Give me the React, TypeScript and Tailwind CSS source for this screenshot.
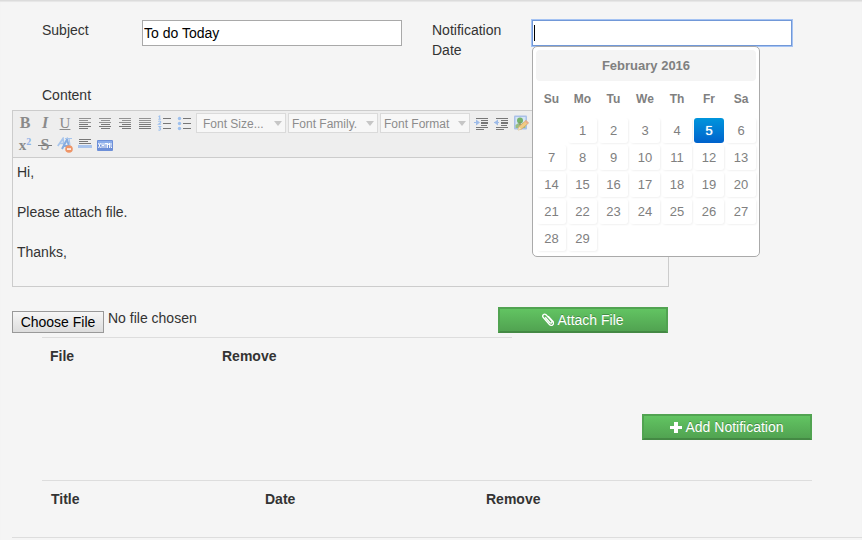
import { useRef, type ReactNode } from "react";

const WEEK_DAYS = ["Su", "Mo", "Tu", "We", "Th", "Fr", "Sa"];
const WEEKS: (number | null)[][] = [
  [null, 1, 2, 3, 4, 5, 6],
  [7, 8, 9, 10, 11, 12, 13],
  [14, 15, 16, 17, 18, 19, 20],
  [21, 22, 23, 24, 25, 26, 27],
  [28, 29, null, null, null, null, null],
];
const SELECTED_DAY = 5;

function ToolButton({ label, children }: { label: string; children: ReactNode }) {
  return (
    <button
      type="button"
      aria-label={label}
      className="flex h-5 w-5 shrink-0 items-center justify-center text-[#8a8a8a]"
    >
      {children}
    </button>
  );
}

function Icon({ children }: { children: ReactNode }) {
  return (
    <svg width="16" height="16" viewBox="0 0 16 16" shapeRendering="crispEdges" aria-hidden="true">
      {children}
    </svg>
  );
}

function AlignIcon({ align }: { align: "left" | "center" | "right" | "full" }) {
  return (
    <Icon>
      {[3, 5, 7, 9, 11, 13].map((y, i) => {
        const w = align === "full" || i % 2 === 0 ? 12 : 9;
        const x = align === "center" ? (w === 12 ? 2 : 4) : align === "right" ? 14 - w : 2;
        return <rect key={y} x={x} y={y} width={w} height="1" fill={i > 2 ? "#777" : "#929292"} />;
      })}
    </Icon>
  );
}

function IndentIcon({ outward }: { outward?: boolean }) {
  return (
    <Icon>
      <path d="M3 3h12v1H3zM8 5h7v1H8zM8 7h7v2H8zM8 10h6v1H8zM3 12h12v1H3zM3 14h8v1H3z" fill="#777" />
      <path d={outward ? "M5 4.5v6L1 7.5z" : "M3 4.5v6l4-3z"} fill="#9dbbe8" shapeRendering="auto" />
      <path d="M1 7h5v1H1z" fill="#9dbbe8" />
    </Icon>
  );
}

function NumberListIcon() {
  return (
    <svg width="16" height="16" viewBox="0 0 16 16" aria-hidden="true">
      <path
        d="M1.5 1.8L2.7 1v3.2M1.3 4.2h2.6M1.3 6.5q1.6-.9 2.3 0T1.5 9.3h2.6M1.3 11.5h2.4L2.5 13q2.2.8.2 2.2l-1.4-.2"
        fill="none"
        stroke="#9dc0ee"
        strokeWidth="1.1"
      />
      <path d="M6 3h8v1H6zM6 8h8v1H6zM6 13h8v1H6z" fill="#777" />
    </svg>
  );
}

function BulletListIcon() {
  return (
    <svg width="16" height="16" viewBox="0 0 16 16" aria-hidden="true">
      {[3.5, 8.5, 13.5].map((y) => (
        <circle key={y} cx="2.5" cy={y} r="1.7" fill="#9dc0ee" />
      ))}
      <path d="M6 3h8v1H6zM6 8h8v1H6zM6 13h8v1H6z" fill="#777" />
    </svg>
  );
}

function ImageIcon() {
  return (
    <svg width="16" height="16" viewBox="0 0 16 16" aria-hidden="true">
      <rect x="1" y=".5" width="13" height="14" rx="1" fill="#a9c0e8" />
      <rect x="2.5" y="2" width="10" height="11" fill="#d5e5f5" />
      <path d="M2.5 10l3-2 3 1 4-2v6h-10z" fill="#98bd83" />
      <circle cx="7" cy="5.5" r="3" fill="#75b26b" />
      <path d="M6.5 7h1v3h-1z" fill="#8c7c60" />
      <path d="M5 15l1-3.5 7-6 2.5 2.6-7 6z" fill="#f1cb83" stroke="#d6a85e" strokeWidth=".7" />
      <path d="M5 15l1-3.2 2 2.2z" fill="#f6e4c4" />
      <path d="M12 6.5l1.3-1.2 2.3 2.6-1.2 1.1z" fill="#e8a98d" />
    </svg>
  );
}

function CleanupIcon() {
  return (
    <svg width="16" height="16" viewBox="0 0 16 16" aria-hidden="true">
      <path d="M.8 9L6 1.5 7 9M2.7 6.5h4" fill="none" stroke="#a7c5ec" strokeWidth="1.7" />
      <path d="M5 12l5-9.5 2.7 9M7 9h5" fill="none" stroke="#86ace0" strokeWidth="2" />
      <path d="M8 1.5h7M12 1.5l1 7" stroke="#a7c5ec" strokeWidth="1.2" />
      <circle cx="12" cy="12" r="3.8" fill="#ee9568" />
      <path d="M10 11.3h4v1.5h-4z" fill="#fff" />
    </svg>
  );
}

function RuleIcon() {
  return (
    <Icon>
      <path d="M2 2h12v1H2zM2 4h9v1H2zM2 6h12v1H2z" fill="#777" />
      <path d="M1 8h14v3H1z" fill="#a9c4ec" />
    </Icon>
  );
}

function XhtmlIcon() {
  return (
    <svg width="16" height="16" viewBox="0 0 16 16" aria-hidden="true">
      <rect y="3" width="16" height="11" rx="1" fill="#6d8fd8" />
      <rect x="1" y="4" width="14" height="4" fill="#8badea" />
      <path
        d="M1.5 6l2 5M3.5 6l-2 5M5 6v5M7 6v5M5 8.5h2M8 6.5h2M9 6v5M10.5 11V6l1 2 1-2v5M14 6v4.5h1"
        fill="none"
        stroke="#fff"
        strokeWidth=".9"
      />
    </svg>
  );
}

function ToolSelect({ label, roomy }: { label: string; roomy?: boolean }) {
  return (
    <div className="relative h-5 w-[90px] shrink-0">
      <select
        aria-label={label}
        className={`${roomy ? "pl-[6px]" : "pl-[3px]"} h-5 w-full appearance-none border border-[#dadada] bg-[#f7f7f7] pt-[2px] pr-4 text-[12px] leading-4 text-[#8c8c8c]`}
      >
        <option>{label}</option>
      </select>
      <svg
        className="pointer-events-none absolute top-2 right-1"
        width="8"
        height="5"
        viewBox="0 0 8 5"
        aria-hidden="true"
      >
        <path d="M0 0h8L4 5z" fill="#c6c6c6" />
      </svg>
    </div>
  );
}

function Calendar() {
  return (
    <div className="absolute top-[26px] left-0 z-10 w-[228px] rounded-[5px] border border-[#aaa] bg-white p-[3px] pb-1 text-[13px] text-[#808080]">
      <div className="flex h-[31px] items-center justify-center rounded-[4px] bg-[#f4f4f4] font-bold">
        February 2016
      </div>
      <table className="w-full table-fixed border-collapse text-center">
        <colgroup>
          <col className="w-[31px]" />
          <col className="w-[31px]" />
          <col className="w-[31px]" />
          <col className="w-8" />
          <col className="w-8" />
          <col className="w-8" />
          <col className="w-8" />
        </colgroup>
        <thead>
          <tr className="h-9">
            {WEEK_DAYS.map((day) => (
              <th key={day} className="p-0 text-[12px] font-bold">
                {day}
              </th>
            ))}
          </tr>
        </thead>
        <tbody>
          {WEEKS.map((week, row) => (
            <tr key={row} className="h-[27px]">
              {week.map((day, col) => (
                <td key={col} className="p-px">
                  {day !== null && (
                    <button
                      type="button"
                      className={
                        day === SELECTED_DAY
                          ? "block h-[25px] w-full rounded-[3px] bg-linear-to-b from-[#0095dc] to-[#0062cc] text-white [text-shadow:0_0_1px_#ffffff]"
                          : "block h-[25px] w-full rounded-[3px] shadow-[1px_1px_2px_#f1f1f1]"
                      }
                    >
                      {day}
                    </button>
                  )}
                </td>
              ))}
            </tr>
          ))}
        </tbody>
      </table>
    </div>
  );
}

function GreenButton({ children }: { children: ReactNode }) {
  return (
    <button
      type="button"
      className="flex h-[26px] w-[170px] items-center justify-center gap-[3px] border-2 border-[#51a351] border-b-[#448944] bg-linear-to-b from-[#62c462] to-[#51a351] text-white [text-shadow:0_-1px_0_rgba(0,0,0,0.25)]"
    >
      {children}
    </button>
  );
}

export default function App() {
  const fileInput = useRef<HTMLInputElement>(null);

  return (
    <div className="min-h-screen border-t border-[#dcdcdc] bg-[#f5f5f5] pl-3 font-['Liberation_Sans',Arial,sans-serif] text-[14px] leading-5 text-[#333] shadow-[inset_0_1px_1px_#e6e6e6]">
      <form onSubmit={(e) => e.preventDefault()}>
        <div className="flex items-start gap-[30px] pt-[19px] pl-[30px]">
          <div className="flex items-start">
            <label htmlFor="subject" className="w-[100px]">
              Subject
            </label>
            <input
              id="subject"
              defaultValue="To do Today"
              className="h-[26px] w-[260px] border border-[#a9a9a9] bg-white px-px text-black"
            />
          </div>
          <div className="flex items-start">
            <label htmlFor="notification-date" className="w-[100px] pr-4">
              Notification Date
            </label>
            <div className="relative">
              <input
                id="notification-date"
                className="block h-[26px] w-[260px] border border-[#7198d8] bg-white px-px text-black shadow-[0_0_0_1px_#a5c3f3] outline-none"
              />
              <span className="absolute top-[5px] left-[2px] h-4 w-px bg-black" />
              <Calendar />
            </div>
          </div>
        </div>

        <label htmlFor="content" className="mt-[25px] mb-[5px] block pl-[30px]">
          Content
        </label>
        <div className="w-full max-w-[657px] border border-[#ccc]">
          <div className="flex flex-col gap-[2px] border-b border-[#ccc] bg-[#eee] py-[2px] pl-[2px]">
            <div className="flex">
              <ToolButton label="Bold">
                <span className="font-['Liberation_Serif',serif] text-[16px] font-bold">B</span>
              </ToolButton>
              <ToolButton label="Italic">
                <span className="font-['Liberation_Serif',serif] text-[16px] font-bold italic">I</span>
              </ToolButton>
              <ToolButton label="Underline">
                <span className="font-['Liberation_Serif',serif] text-[15px] underline">U</span>
              </ToolButton>
              <ToolButton label="Align left">
                <AlignIcon align="left" />
              </ToolButton>
              <ToolButton label="Align center">
                <AlignIcon align="center" />
              </ToolButton>
              <ToolButton label="Align right">
                <AlignIcon align="right" />
              </ToolButton>
              <ToolButton label="Justify">
                <AlignIcon align="full" />
              </ToolButton>
              <ToolButton label="Numbered list">
                <NumberListIcon />
              </ToolButton>
              <ToolButton label="Bulleted list">
                <BulletListIcon />
              </ToolButton>
              <div className="flex gap-[2px] px-px">
                <ToolSelect label="Font Size..." roomy />
                <ToolSelect label="Font Family." />
                <ToolSelect label="Font Format" />
              </div>
              <ToolButton label="Indent">
                <IndentIcon />
              </ToolButton>
              <ToolButton label="Outdent">
                <IndentIcon outward />
              </ToolButton>
              <ToolButton label="Insert image">
                <ImageIcon />
              </ToolButton>
            </div>
            <div className="flex">
              <ToolButton label="Superscript">
                <span className="font-['Liberation_Serif',serif] text-[15px] font-bold">
                  x<span className="align-[5px] text-[10px] leading-none text-[#8fb1e6]">2</span>
                </span>
              </ToolButton>
              <ToolButton label="Strikethrough">
                <span className="bg-[linear-gradient(#777,#777)] bg-[length:100%_1px] bg-center bg-no-repeat px-[3px] font-['Liberation_Serif',serif] text-[16px] font-bold">
                  S
                </span>
              </ToolButton>
              <ToolButton label="Remove formatting">
                <CleanupIcon />
              </ToolButton>
              <ToolButton label="Horizontal rule">
                <RuleIcon />
              </ToolButton>
              <ToolButton label="Edit XHTML">
                <XhtmlIcon />
              </ToolButton>
            </div>
          </div>
          <textarea
            id="content"
            defaultValue={"Hi,\n\nPlease attach file.\n\nThanks,"}
            className="block h-32 w-full resize-none px-1 pt-1"
          />
        </div>

        <div className="mt-5 flex w-full max-w-[656px] items-start justify-between">
          <div className="flex items-start gap-1">
            <button
              type="button"
              onClick={() => fileInput.current?.click()}
              className="mt-1 h-[22px] w-[92px] border border-[#999] bg-linear-to-b from-[#f6f6f6] to-[#dddddd] text-black"
            >
              Choose File
            </button>
            <input ref={fileInput} type="file" aria-label="File" className="hidden" />
            <span className="pt-px">No file chosen</span>
          </div>
          <GreenButton>
            <svg width="12" height="14" viewBox="0 0 12 14" aria-hidden="true">
              <path
                d="M3.2 4.3l4.6 5.2q1 1 1.8.2t0-1.8L4.1 1.8Q2.6.4 1.3 1.7t0 2.8l5.9 6.8q2 2 3.6.4t0-3.6L6.2 3.1"
                fill="none"
                stroke="#fff"
                strokeWidth="1.3"
              />
            </svg>
            Attach File
          </GreenButton>
        </div>

        <table className="mt-1 ml-[30px] w-[470px] table-fixed border-t border-[#ddd] text-left">
          <thead>
            <tr>
              <th className="w-[172px] p-2 font-bold">File</th>
              <th className="p-2 font-bold">Remove</th>
            </tr>
          </thead>
        </table>

        <div className="mt-10 mr-[50px] ml-[30px]">
          <div className="flex justify-end">
            <GreenButton>
              <svg width="12" height="11" viewBox="0 0 12 11" aria-hidden="true">
                <path d="M4 0h4v4h4v3H8v4H4V7H0V4h4z" fill="#fff" />
              </svg>
              Add Notification
            </GreenButton>
          </div>
          <table className="mt-10 w-full table-fixed border-t border-[#ddd] text-left">
            <thead>
              <tr>
                <th className="w-[214px] px-[9px] py-2 font-bold">Title</th>
                <th className="w-[221px] px-[9px] py-2 font-bold">Date</th>
                <th className="px-[9px] py-2 font-bold">Remove</th>
              </tr>
            </thead>
          </table>
        </div>
      </form>
      <hr className="mt-5 border-t border-[#ddd]" />
    </div>
  );
}
